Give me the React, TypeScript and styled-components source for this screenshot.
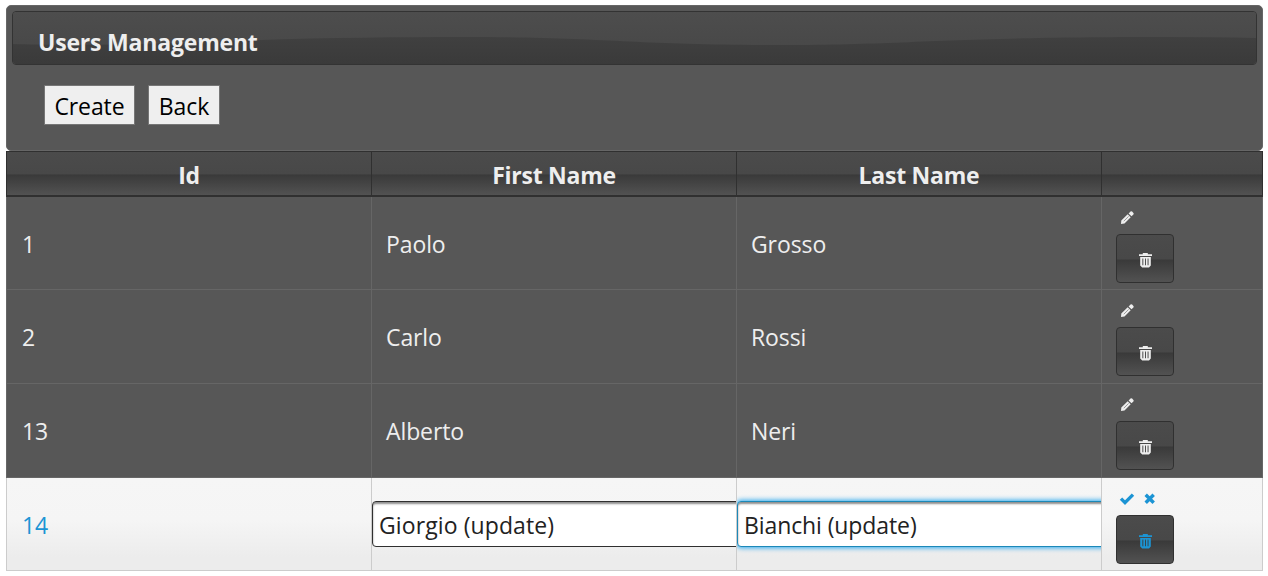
import React from "react";
import styled, { createGlobalStyle } from "styled-components";

const Global = createGlobalStyle`
  * { box-sizing: border-box; }
  body {
    margin: 0;
    background: #fff;
    font-family: "Open Sans", "Noto Sans", sans-serif;
    font-size: 23px;
    color: #eee;
  }
`;

const Page = styled.main`
  padding: 5px 5px 5px 6px;
`;

const Panel = styled.section`
  height: 146px;
  padding: 5px;
  background: #575757;
  border: 1px solid #666;
  border-radius: 5px;
`;

const PanelHeader = styled.header`
  position: relative;
  display: flex;
  align-items: center;
  height: 54px;
  padding: 8px 25px 0;
  border: 1px solid #333;
  border-radius: 4px;
  overflow: hidden;
`;

const Wave = styled.svg`
  position: absolute;
  inset: 0;
  width: 100%;
  height: 100%;
`;

const Title = styled.h1`
  position: relative;
  margin: 0;
  font-size: 23px;
  line-height: 32px;
  font-weight: 700;
  letter-spacing: -0.19px;
`;

const Toolbar = styled.div`
  display: flex;
  gap: 13px;
  padding: 20px 32px;
`;

const ToolButton = styled.button<{ $width: number }>`
  width: ${(p) => p.$width}px;
  height: 40px;
  padding: 2px 0 0;
  border: 1px solid #767676;
  border-radius: 1px;
  background: #efefef;
  color: #000;
  font: inherit;
  line-height: 32px;
  letter-spacing: -0.1px;
`;

const Row = styled.div<{ $editing?: boolean; $height: number }>`
  display: grid;
  grid-template-columns: 365px 365px 365px 1fr;
  height: ${(p) => p.$height}px;
  border-left: 1px solid ${(p) => (p.$editing ? "#ccc" : "#666")};
  color: ${(p) => (p.$editing ? "#1c94d4" : "#eee")};
  background: ${(p) => (p.$editing ? "linear-gradient(#f6f6f6 0, #f5f5f5 45%, #ececec 85%, #ececec)" : "#575757")};
  & > * {
    border-right: 1px solid ${(p) => (p.$editing ? "#ccc" : "#666")};
    border-bottom: 1px solid ${(p) => (p.$editing ? "#ccc" : "#666")};
  }
`;

const HeaderRow = styled.div`
  display: grid;
  grid-template-columns: 365px 365px 365px 1fr;
  height: 46px;
  border: solid #303030;
  border-width: 1px 0 2px 1px;
  background: linear-gradient(#4b4b4b 0, #484848 50%, #3a3a3a 54%, #525252 100%);
`;

const HeaderCell = styled.div`
  display: flex;
  align-items: center;
  justify-content: center;
  padding-top: 3px;
  border-right: 1px solid #303030;
  font-weight: 700;
  line-height: 32px;
  letter-spacing: -0.25px;
`;

const Cell = styled.div<{ $flush?: boolean; $lead?: boolean }>`
  display: flex;
  align-items: center;
  min-width: 0;
  padding: ${(p) => (p.$flush ? "0" : p.$lead ? "1px 15px 0" : "1px 14px 0")};
  overflow: hidden;
  letter-spacing: -0.1px;
`;

const Actions = styled.div`
  display: flex;
  flex-direction: column;
  padding: 13px 14px 0;
`;

const RowIcons = styled.div`
  display: flex;
  gap: 7px;
  height: 16px;
  margin-bottom: 8px;
  padding-left: 3px;
`;

const DeleteButton = styled.button`
  display: flex;
  align-items: center;
  justify-content: center;
  width: 58px;
  height: 49px;
  padding: 3px 0 0;
  border: 1px solid #303030;
  border-radius: 4px;
  background: linear-gradient(#4b4b4b 0, #484848 50%, #3a3a3a 54%, #525252 100%);
  color: inherit;
`;

const Field = styled.input<{ $focused?: boolean }>`
  flex: none;
  width: 380px;
  height: 46px;
  padding: 2px 6px 0;
  border: 1px solid ${(p) => (p.$focused ? "#1c88b8" : "#303030")};
  border-radius: 4px;
  outline: none;
  background: #fff;
  color: #222;
  font: inherit;
  letter-spacing: ${(p) => (p.$focused ? "-0.1px" : "0.1px")};
  box-shadow: inset 0 2px 2px #8f8f8f${(p) => (p.$focused ? ", 0 0 5px 1px #2ba8ee" : "")};
`;

const PencilIcon = () => (
  <svg width="16" height="16" viewBox="0 0 16 16" fill="currentColor">
    <path d="M2 14l.3-3.6 6.4-6.2 3 3-6.2 6.4zM9.6 3.4l1.9-1.8q.8-.7 1.6 0l1.3 1.3q.7.8 0 1.6l-1.9 1.8z" />
    <path d="M4.8 11.2l4.8-4.8" stroke="#888" strokeWidth=".8" />
  </svg>
);

const TrashIcon = () => (
  <svg width="14" height="16" viewBox="0 0 14 16" fill="currentColor">
    <path fillRule="evenodd" d="M1 2.3h3.8V1h5v1.3H14V4H1zM2.2 5h10.6v8.5L11 15.6H4.2l-2-2.1zM4.4 6.5v6.8h.9V6.5zm2.6 0v6.8h.9V6.5zm2.6 0v6.8h.9V6.5z" />
  </svg>
);

const CheckIcon = () => (
  <svg width="16" height="16" viewBox="0 0 16 16" fill="none" stroke="currentColor" strokeWidth="3.4">
    <path d="M2 7.6l4 4 8-8" />
  </svg>
);

const CloseIcon = () => (
  <svg width="14" height="16" viewBox="0 0 14 16" fill="none" stroke="currentColor" strokeWidth="3.4">
    <path d="M3.7 3.7l8 8M11.7 3.7l-8 8" />
  </svg>
);

const users = [
  { id: 1, first: "Paolo", last: "Grosso", height: 93 },
  { id: 2, first: "Carlo", last: "Rossi", height: 94 },
  { id: 13, first: "Alberto", last: "Neri", height: 94 },
  { id: 14, first: "Giorgio (update)", last: "Bianchi (update)", height: 93, editing: true },
];

export default function App() {
  return (
    <Page>
      <Global />
      <Panel>
        <PanelHeader>
          <Wave viewBox="0 0 1243 52" preserveAspectRatio="none">
            <defs>
              <linearGradient id="light" x2="0" y2="1">
                <stop stopColor="#4d4d4d" />
                <stop offset="1" stopColor="#464646" />
              </linearGradient>
              <linearGradient id="dark" x2="0" y2="1">
                <stop stopColor="#404040" />
                <stop offset="1" stopColor="#3a3a3a" />
              </linearGradient>
            </defs>
            <rect width="1243" height="52" fill="url(#light)" />
            <path fill="url(#dark)" d="M0 32C40 33.5 110 33 190 30C290 26 370 25 450 25C590 25 620 33 760 33C900 33 920 25 1150 25Q1200 25 1243 26V52H0z" />
          </Wave>
          <Title>Users Management</Title>
        </PanelHeader>
        <Toolbar>
          <ToolButton $width={91}>Create</ToolButton>
          <ToolButton $width={72}>Back</ToolButton>
        </Toolbar>
      </Panel>
      <HeaderRow>
        <HeaderCell>Id</HeaderCell>
        <HeaderCell>First Name</HeaderCell>
        <HeaderCell>Last Name</HeaderCell>
        <HeaderCell />
      </HeaderRow>
      {users.map((u) => (
        <Row key={u.id} $editing={u.editing} $height={u.height}>
          <Cell $lead>{u.id}</Cell>
          <Cell $flush={u.editing}>{u.editing ? <Field defaultValue={u.first} /> : u.first}</Cell>
          <Cell $flush={u.editing}>{u.editing ? <Field $focused defaultValue={u.last} /> : u.last}</Cell>
          <Actions>
            <RowIcons>
              {u.editing ? (
                <>
                  <CheckIcon />
                  <CloseIcon />
                </>
              ) : (
                <PencilIcon />
              )}
            </RowIcons>
            <DeleteButton>
              <TrashIcon />
            </DeleteButton>
          </Actions>
        </Row>
      ))}
    </Page>
  );
}
